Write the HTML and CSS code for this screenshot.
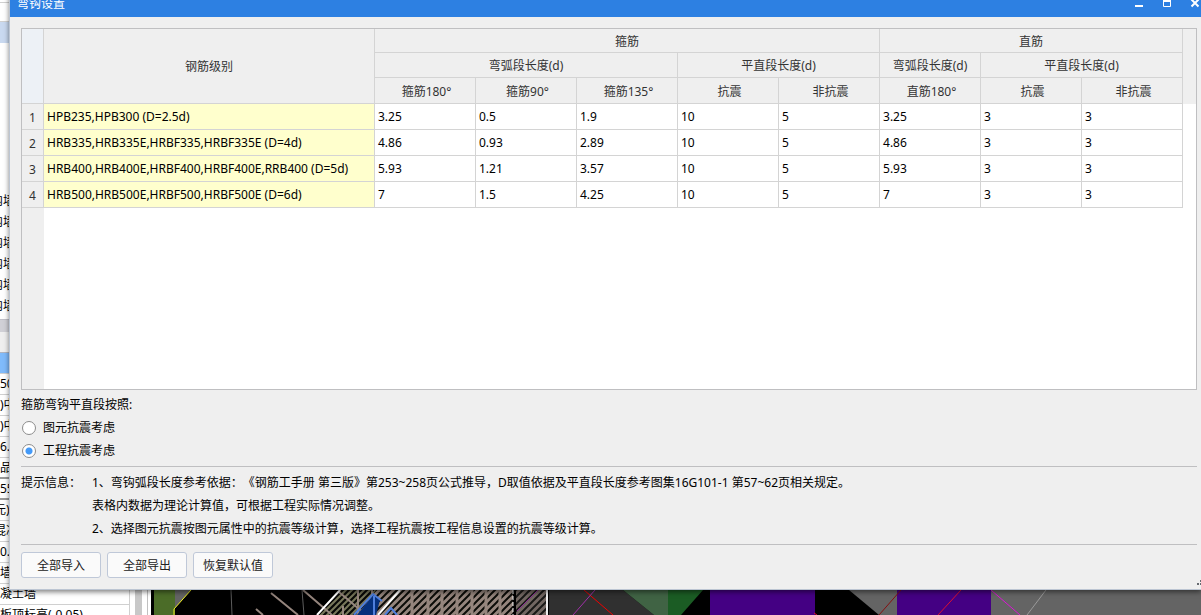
FILE: index.html
```html
<!DOCTYPE html>
<html lang="zh-CN">
<head>
<meta charset="utf-8">
<title>弯钩设置</title>
<link rel="stylesheet" href="styles.css">
</head>
<body>
<div class="workspace">
  <div class="side">
    <div class="side-row short"></div>
    <div class="side-row selected"></div>
    <div class="side-blank"></div>
    <div class="side-item">内墙</div>
    <div class="side-item">内墙</div>
    <div class="side-item">内墙</div>
    <div class="side-item">内墙</div>
    <div class="side-item">内墙</div>
    <div class="side-item">内墙</div>
    <div class="side-split"></div>
    <div class="side-head"></div>
    <div class="side-row active"></div>
    <div class="side-row">50</div>
    <div class="side-row">)中</div>
    <div class="side-row">)中</div>
    <div class="side-row">6.</div>
    <div class="side-row strong">品</div>
    <div class="side-row strong">55</div>
    <div class="side-row cut">元)</div>
    <div class="side-row cut">混凝</div>
    <div class="side-row">0.0</div>
    <div class="side-row">墙</div>
    <div class="side-row">凝土墙</div>
    <div class="side-row">板顶标高(-0.05)</div>
  </div>
  <div class="side-scroll"><div class="side-thumb"></div></div>
  <div class="model">
    <svg class="drawing" viewBox="154 590 1047 25" preserveAspectRatio="xMinYMin slice" aria-hidden="true">
      <defs>
        <pattern id="hatch" width="7" height="7" patternUnits="userSpaceOnUse">
          <rect width="7" height="7" fill="#95857d"/>
          <path d="M-1 8L8-1M-1 1L1-1M6 8L8 6" stroke="#0c0c08" stroke-width="2"/>
        </pattern>
        <pattern id="olive" width="6" height="6" patternUnits="userSpaceOnUse">
          <rect width="6" height="6" fill="#080806"/>
          <path d="M-1 7L7-1M-1 1L1-1M5 7L7 5" stroke="#77775a" stroke-width="2"/>
        </pattern>
      </defs>
      <rect x="151" y="590" width="1050" height="25" fill="#000"/>
      <rect x="154" y="590" width="21" height="25" fill="#4b6c28"/>
      <path d="M175 590H191L175 608Z" fill="#646464"/>
      <path d="M191 590L174 609V615" fill="none" stroke="#eeee20"/>
      <path d="M231 590L232 615M302 590L304 615" stroke="#5c5c5c"/>
      <path d="M340 590H378L364 615H318Z" fill="url(#olive)"/>
      <path d="M376 590H513V615H358Z" fill="url(#hatch)"/>
      <path d="M412 590V615M428 590V615M442 590V615M457 590V615M472 590V615M486 590V615M500 590V615" stroke="#95857d" stroke-width="3"/>
      <path d="M343 615V606M358 590V615M372 590V615" stroke="#95857d" stroke-width="2"/>
      <path d="M271 593L298 615M256 609L263 615M303 590L332 615M339 592L366 615" stroke="#95857d" stroke-width="2"/>
      <path d="M357 615L374 594L380 600L376 615Z" fill="#05307c"/>
      <path d="M354 615L373 594L382 601M374 596V615M385 615L391 608L397 615" fill="none" stroke="#4f7fdc" stroke-width="2"/>
      <path d="M340 590L317 615M400 590L378 615" stroke="#fff" stroke-width="2"/>
      <path d="M513 590V615" stroke="#eee" stroke-dasharray="4 2"/>
      <rect x="516" y="590" width="30" height="25" fill="url(#hatch)"/>
      <rect x="516" y="590" width="30" height="25" fill="#303030" opacity=".35"/>
      <path d="M538 590L517 611" stroke="#8b2b94"/>
      <rect x="546" y="590" width="2" height="25" fill="#eee"/>
      <path d="M549 590H623L654 615H549Z" fill="#303030"/>
      <path d="M623 590H669V615H654Z" fill="#406344"/>
      <path d="M668 590H703L681 615H668Z" fill="#1b5c24"/>
      <path d="M584 590L613 615" stroke="#f00000"/>
      <path d="M595 590L573 615" stroke="#a030a8"/>
      <rect x="710" y="590" width="105" height="25" fill="#440083"/>
      <path d="M849 590H897V615H879Z" fill="#646464"/>
      <rect x="897" y="590" width="94" height="25" fill="#440083"/>
      <path d="M901 590L879 615" stroke="#851010"/>
      <path d="M961 590L938 615M814 613L817 615" stroke="#dc1030"/>
      <rect x="991" y="590" width="210" height="25" fill="#646464"/>
      <path d="M991 590L1020 615" stroke="#dc16d6"/>
      <path d="M1046 590L1027 615" stroke="#999"/>
    </svg>
  </div>
</div>

<main class="dialog">
  <header class="titlebar">
    <h1 class="title">弯钩设置</h1>
    <div class="window-buttons">
      <button class="window-button" type="button" aria-label="最小化"><svg viewBox="0 0 8 11"><path d="M0 8H8" stroke="#fff" stroke-width="2"/></svg></button>
      <button class="window-button" type="button" aria-label="最大化"><svg viewBox="0 0 8 11"><path d="M.5 2V8.500H7.500V2" fill="none" stroke="#fff"/><path d="M0 2.500H8" stroke="#fff" stroke-width="3"/></svg></button>
      <button class="window-button" type="button" aria-label="关闭"><svg viewBox="0 0 8 11"><path d="M.5 1.500L7.500 8.500M7.500 1.500L.5 8.500" stroke="#fff" stroke-width="2"/></svg></button>
    </div>
  </header>
  <div class="content">
    <div class="sheet">
      <table class="grid">
        <colgroup><col class="c-index"><col class="c-grade"><col class="c-num"><col class="c-num"><col class="c-num"><col class="c-num"><col class="c-num"><col class="c-num"><col class="c-num"><col class="c-num"><col></colgroup>
        <thead>
          <tr class="h-top"><td class="corner" rowspan="3"></td><th rowspan="3">钢筋级别</th><th colspan="5">箍筋</th><th colspan="3">直筋</th><td class="rest" rowspan="3"></td></tr>
          <tr class="h-mid"><th colspan="3">弯弧段长度(d)</th><th colspan="2">平直段长度(d)</th><th>弯弧段长度(d)</th><th colspan="2">平直段长度(d)</th></tr>
          <tr class="h-low"><th>箍筋180°</th><th>箍筋90°</th><th>箍筋135°</th><th>抗震</th><th>非抗震</th><th>直筋180°</th><th>抗震</th><th>非抗震</th></tr>
        </thead>
        <tbody>
          <tr><th>1</th><td class="grade">HPB235,HPB300 (D=2.5d)</td><td>3.25</td><td>0.5</td><td>1.9</td><td>10</td><td>5</td><td>3.25</td><td>3</td><td>3</td></tr>
          <tr><th>2</th><td class="grade">HRB335,HRB335E,HRBF335,HRBF335E (D=4d)</td><td>4.86</td><td>0.93</td><td>2.89</td><td>10</td><td>5</td><td>4.86</td><td>3</td><td>3</td></tr>
          <tr><th>3</th><td class="grade">HRB400,HRB400E,HRBF400,HRBF400E,RRB400 (D=5d)</td><td>5.93</td><td>1.21</td><td>3.57</td><td>10</td><td>5</td><td>5.93</td><td>3</td><td>3</td></tr>
          <tr><th>4</th><td class="grade">HRB500,HRB500E,HRBF500,HRBF500E (D=6d)</td><td>7</td><td>1.5</td><td>4.25</td><td>10</td><td>5</td><td>7</td><td>3</td><td>3</td></tr>
        </tbody>
      </table>
    </div>
    <fieldset class="options">
      <legend class="legend">箍筋弯钩平直段按照:</legend>
      <label class="option"><input class="radio" type="radio" name="basis">图元抗震考虑</label>
      <label class="option"><input class="radio" type="radio" name="basis" checked>工程抗震考虑</label>
    </fieldset>
    <section class="hints">
      <p class="hint-label">提示信息：</p>
      <div class="hint-text">
        <p>1、弯钩弧段长度参考依据：《钢筋工手册 第三版》第253~258页公式推导，D取值依据及平直段长度参考图集16G101-1 第57~62页相关规定。</p>
        <p>表格内数据为理论计算值，可根据工程实际情况调整。</p>
        <p>2、选择图元抗震按图元属性中的抗震等级计算，选择工程抗震按工程信息设置的抗震等级计算。</p>
      </div>
    </section>
    <div class="actions">
      <button class="action" type="button">全部导入</button>
      <button class="action" type="button">全部导出</button>
      <button class="action" type="button">恢复默认值</button>
    </div>
  </div>
  <svg class="grip" viewBox="0 0 6 6" aria-hidden="true"><path d="M2 4H4M5 4H6M5 1H6" stroke="#666a70" stroke-width="2"/></svg>
</main>
</body>
</html>
```
FILE: styles.css
```css
* { box-sizing: border-box; }

body {
  margin: 0;
  height: 100vh;
  overflow: hidden;
  position: relative;
  background: #fff;
  color: #000;
  font: 12px/20px "Noto Sans", "Noto Sans CJK SC", sans-serif;
  font-kerning: none;
  text-spacing-trim: space-all;
}

h1, p { margin: 0; font-size: 12px; font-weight: 400; }
button { padding: 0; font: inherit; }

.workspace { display: flex; height: 100%; overflow: hidden; }
.side { width: 130px; flex: none; overflow: hidden; border-right: 1px solid #d0d0d0; white-space: nowrap; }
.side-row { height: 21px; border-bottom: 1px solid #d0d0d0; }
.side-row.short { height: 3px; margin-bottom: 18px; }
.side-row.selected { height: 22px; background: #c9d9f0; border-top: 1px solid #d0d0d0; border-bottom: 0; }
.side-row.active { background: #80bbfb; border-top: 1px solid #b0b4c0; height: 22px; }
.side-row.strong { border-bottom: 2px solid #999; }
.side-row.cut { text-indent: -6px; }
.side-blank { height: 148px; }
.side-item { height: 21px; text-indent: -9px; }
.side-split { height: 13px; margin-top: 2px; background: #d0d0d6; border-top: 1px solid #c0c0c8; }
.side-head { height: 20px; background: #efefef; }
.side-scroll { width: 18px; flex: none; padding: 0 5px; border-right: 1px solid #c0c0c0; }
.side-thumb { height: 100%; background: #c8c8c8; }
.model { flex: 1; display: flex; align-items: flex-end; margin-left: 3px; border-left: 3px solid #000; }
.drawing { display: block; width: 100%; height: 25px; }

.dialog {
  position: absolute;
  top: -10px;
  right: 0;
  bottom: 25px;
  left: 9px;
  display: flex;
  flex-direction: column;
  background: #efefef;
  border-left: 1px solid #bcc5d2;
  border-bottom: 1px solid #bcc5d2;
  box-shadow: 0 2px 5px rgba(0, 0, 0, .5);
}

.titlebar {
  flex: none;
  height: 27px;
  display: flex;
  align-items: center;
  justify-content: space-between;
  padding: 0 2px 0 7px;
  background: #2d80e2;
  color: #fff;
}
.window-buttons { display: flex; gap: 20px; }
.window-button { width: 8px; height: 11px; border: 0; background: none; }
.window-button svg { display: block; width: 8px; height: 11px; overflow: visible; }

.content { flex: 1; display: flex; flex-direction: column; padding: 11px 4px 11px 11px; }

.sheet {
  flex: 1;
  overflow: hidden;
  border: 1px solid #bfbfc1;
  background: linear-gradient(to right, #efefef 22px, #fff 22px);
}
.grid { width: 100%; table-layout: fixed; border-collapse: separate; border-spacing: 0; }
.c-index { width: 22px; }
.c-grade { width: 331px; }
.c-num { width: 101px; }
.grid th, .grid td {
  height: 26px;
  padding: 0 3px;
  border-right: 1px solid #d4d4d4;
  border-bottom: 1px solid #d4d4d4;
  font-weight: 400;
  text-align: left;
  white-space: nowrap;
}
.grid th { padding: 2px 0 0; background: #efefef; color: #333; text-align: center; }
.grid .h-top th { height: 24px; }
.grid .h-mid th { height: 25px; }
.grid .h-low th { padding-left: 3px; }
.grid .corner { background: #edf1f6; }
.grid .rest { border: 0; background: #efefef; }
.grid .grade { background: #ffffcd; }

.options { margin: 0; padding: 0; border: 0; min-width: 0; }
.legend { padding: 5px 0 0; height: 26px; }
.option { display: flex; align-items: center; gap: 7px; height: 23px; padding-left: 1px; }
.radio {
  appearance: none;
  width: 14px;
  height: 14px;
  margin: 0;
  border: 1px solid #8c8c8c;
  border-radius: 50%;
  background: #fff;
}
.radio:checked { background: radial-gradient(circle, #449af8 3px, #fff 4px); }

.hints {
  display: flex;
  margin-top: 4px;
  padding: 4px 0;
  border-top: 1px solid #bfbfc1;
  border-bottom: 1px solid #bfbfc1;
  line-height: 23px;
}
.hint-label { width: 71px; flex: none; }

.actions { display: flex; gap: 6px; padding-top: 7px; }
.action {
  width: 80px;
  height: 26px;
  padding-top: 2px;
  border: 1px solid #bfc8d8;
  border-radius: 3px;
  background: #fafafa;
  color: #222;
}
.grip { position: absolute; right: 0; bottom: 3px; width: 6px; height: 6px; }
```
